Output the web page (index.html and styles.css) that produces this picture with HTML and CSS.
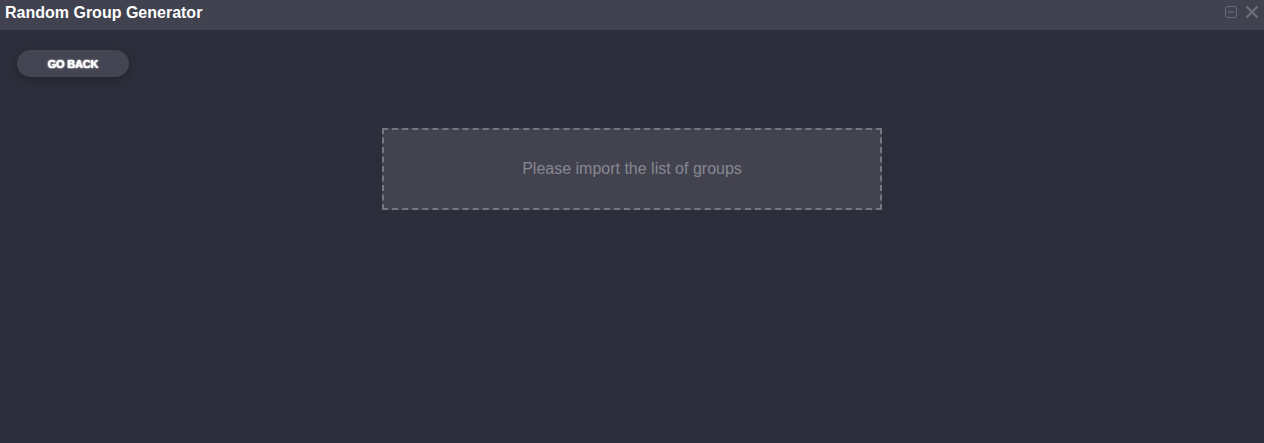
FILE: index.html
```html
<!DOCTYPE html>
<html>
<head>
<meta charset="utf-8">
<link rel="stylesheet" href="styles.css">
</head>
<body>
<div class="titlebar">
  <div class="title">Random Group Generator</div>
  <div class="controls">
    <svg class="ic-min" width="12" height="12" viewBox="0 0 12 12"><rect x="0.5" y="0.5" width="11" height="11" rx="2" fill="none" stroke="#6a6b78" stroke-width="1"/><line x1="3" y1="6" x2="9" y2="6" stroke="#6a6b78" stroke-width="1.2"/></svg>
    <svg class="ic-close" width="14" height="14" viewBox="0 0 14 14"><path d="M1.5 1.5 L12.5 12.5 M12.5 1.5 L1.5 12.5" stroke="#6d6e7a" stroke-width="2.2" fill="none"/></svg>
  </div>
</div>
<div class="main">
  <button class="back">GO BACK</button>
  <div class="dropzone">Please import the list of groups</div>
</div>
</body>
</html>
```
FILE: styles.css
```css
html, body { margin: 0; padding: 0; }
body {
  background: #2c2f3b;
  font-family: "Liberation Sans", Arial, sans-serif;
  width: 1264px;
  height: 443px;
  overflow: hidden;
}
.titlebar {
  height: 30px;
  background: #41424f;
  display: flex;
  align-items: center;
  justify-content: space-between;
  padding: 0 5px 0 5px;
  box-sizing: border-box;
}
.title {
  color: #fff;
  font-weight: bold;
  font-size: 16px;
  margin-top: -5px;
}
.controls {
  display: flex;
  align-items: center;
  gap: 8px;
  margin-top: -6px;
}
.main {
  padding: 20px 0 0 17px;
}
.back {
  display: block;
  width: 112px;
  height: 27px;
  border: none;
  border-radius: 14px;
  background: #444553;
  color: #fff;
  font-family: "Liberation Sans", Arial, sans-serif;
  font-weight: bold;
  font-size: 11px;
  letter-spacing: -0.2px;
  text-shadow: 0 0 2px #fff, 0 0 1px #fff;
  box-shadow: 0 3px 8px rgba(0,0,0,0.25);
  padding: 0;
}
.dropzone {
  margin: 51px 0 0 365px;
  width: 500px;
  height: 82px;
  box-sizing: border-box;
  border: 2px dashed #75767f;
  background: #42434f;
  color: #878891;
  font-size: 16px;
  display: flex;
  align-items: center;
  justify-content: center;
}
```
